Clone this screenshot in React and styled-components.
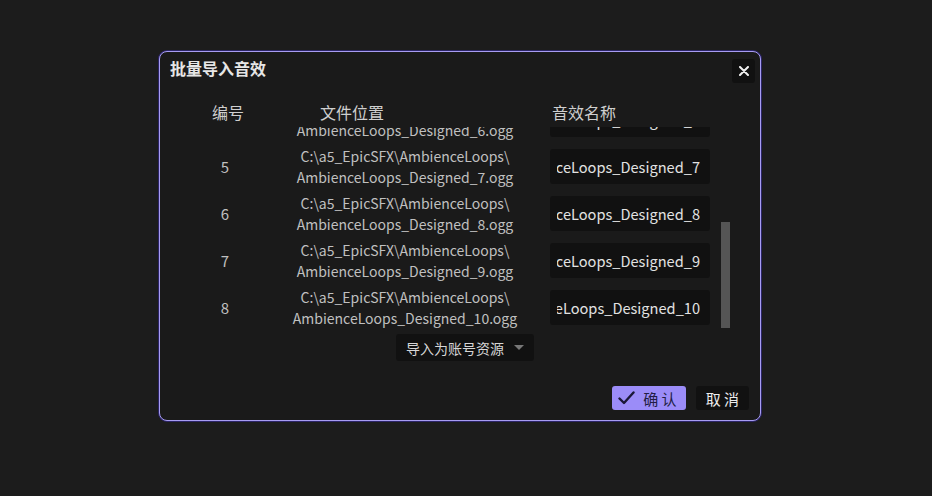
import React, { useLayoutEffect, useRef } from "react";
import styled, { createGlobalStyle } from "styled-components";

const GlobalStyle = createGlobalStyle`
  html, body {
    margin: 0;
    padding: 0;
    background: #1c1c1c;
  }
  body {
    font-family: "Noto Sans CJK SC", "Noto Sans", sans-serif;
  }
`;

const ROW_H = 47;
const VIEW_H = 201;
const SCROLL = 172;

const rows = [1, 2, 3, 4, 5, 6, 7, 8].map((n) => ({
  id: n,
  dir: "C:\\a5_EpicSFX\\AmbienceLoops\\",
  file: `AmbienceLoops_Designed_${n + 2}.ogg`,
  name: `AmbienceLoops_Designed_${n + 2}`,
}));

function App() {
  const viewRef = useRef(null);

  useLayoutEffect(() => {
    if (viewRef.current) viewRef.current.scrollTop = SCROLL;
  }, []);

  const total = rows.length * ROW_H;
  const thumbH = (VIEW_H * VIEW_H) / total;
  const thumbTop = (SCROLL / total) * VIEW_H + 3;

  return (
    <Page>
      <GlobalStyle />
      <Dialog>
        <TitleBar>
          <Title>批量导入音效</Title>
          <CloseButton>
            <svg width="10" height="10" viewBox="0 0 10 10">
              <path d="M1 1 L9 9 M9 1 L1 9" stroke="#f0f0f0" strokeWidth="2" strokeLinecap="round" />
            </svg>
          </CloseButton>
        </TitleBar>

        <HeadRow>
          <HeadCell>编号</HeadCell>
          <HeadCell>文件位置</HeadCell>
          <HeadCell $left>音效名称</HeadCell>
        </HeadRow>

        <ListBox>
          <Viewport ref={viewRef}>
            {rows.map((r) => (
              <Row key={r.id}>
                <Index>{r.id}</Index>
                <Path>
                  <span>{r.dir}</span>
                  <span>{r.file}</span>
                </Path>
                <NameField>
                  <NameClip>
                    <span>{r.name}</span>
                  </NameClip>
                </NameField>
              </Row>
            ))}
          </Viewport>
          <Track>
            <Thumb style={{ height: thumbH, marginTop: thumbTop }} />
          </Track>
        </ListBox>

        <SelectRow>
          <Select>
            导入为账号资源
            <Caret />
          </Select>
        </SelectRow>

        <Footer>
          <Button $primary>
            <svg width="17" height="14" viewBox="0 0 17 14">
              <path d="M1.5 7.5 L6 12 L15.5 1.5" fill="none" stroke="#1b1838" strokeWidth="2.4" strokeLinecap="round" strokeLinejoin="round" />
            </svg>
            确 认
          </Button>
          <Button>取 消</Button>
        </Footer>
      </Dialog>
    </Page>
  );
}

export default App;

const Page = styled.div`
  width: 932px;
  height: 496px;
  box-sizing: border-box;
  padding: 51px 0 0 159px;
  background: #1c1c1c;
`;

const Dialog = styled.div`
  width: 602px;
  height: 370px;
  box-sizing: border-box;
  border: 1px solid #a79cf2;
  border-radius: 8px;
  box-shadow: 0 0 0 1px #2c2566;
  background: #1a1a1a;
  display: flex;
  flex-direction: column;
`;

const TitleBar = styled.div`
  height: 34px;
  display: flex;
  align-items: center;
  justify-content: space-between;
  padding: 0 5px 0 10px;
`;

const Title = styled.div`
  font-size: 16px;
  font-weight: 700;
  color: #e6e6e6;
  margin-top: -3px;
`;

const CloseButton = styled.div`
  width: 23px;
  height: 24px;
  margin-top: 3px;
  border-radius: 3px;
  background: #111111;
  display: flex;
  align-items: center;
  justify-content: center;
`;

const HeadRow = styled.div`
  height: 41px;
  box-sizing: border-box;
  padding-top: 10px;
  margin-left: 20px;
  display: grid;
  grid-template-columns: 96px 152px 1fr;
  align-items: center;
`;

const HeadCell = styled.div`
  font-size: 16px;
  color: #cfcfcf;
  text-align: ${(p) => (p.$left ? "left" : "center")};
  padding-left: ${(p) => (p.$left ? "124px" : "0")};
`;

const ListBox = styled.div`
  height: 201px;
  margin: 0 30px 0 20px;
  display: flex;
`;

const Viewport = styled.div`
  flex: 1;
  overflow: hidden;
`;

const Track = styled.div`
  width: 9px;
  display: flex;
  flex-direction: column;
`;

const Thumb = styled.div`
  width: 9px;
  background: #555555;
`;

const Row = styled.div`
  height: 47px;
  display: grid;
  grid-template-columns: 90px 280px 160px;
  align-items: center;
`;

const Index = styled.div`
  text-align: center;
  font-size: 15px;
  color: #c0c0c0;
`;

const Path = styled.div`
  display: flex;
  flex-direction: column;
  align-items: center;
  padding-right: 10px;
  font-size: 14px;
  line-height: 21px;
  color: #c0c0c0;
  white-space: nowrap;
`;

const NameField = styled.div`
  height: 35px;
  border-radius: 3px;
  background: #111111;
  display: flex;
  align-items: center;
  padding: 0 10px 0 7px;
`;

const NameClip = styled.div`
  flex: 1;
  display: flex;
  justify-content: flex-end;
  overflow: hidden;
  font-size: 14.6px;
  color: #e2e2e2;
  white-space: nowrap;
`;

const SelectRow = styled.div`
  display: flex;
  padding-left: 236px;
  margin-top: 6px;
`;

const Select = styled.div`
  width: 138px;
  height: 27px;
  box-sizing: border-box;
  padding: 0 10px;
  background: #111111;
  border-radius: 3px;
  display: flex;
  align-items: center;
  justify-content: space-between;
  font-size: 14px;
  color: #d6d6d6;
`;

const Caret = styled.span`
  width: 0;
  height: 0;
  border-left: 5px solid transparent;
  border-right: 5px solid transparent;
  border-top: 5px solid #777777;
`;

const Footer = styled.div`
  margin-top: auto;
  padding: 0 11px 10px 0;
  display: flex;
  justify-content: flex-end;
  gap: 10px;
`;

const Button = styled.div`
  height: 24px;
  box-sizing: border-box;
  padding: 0 ${(p) => (p.$primary ? "9px 0 6px" : "10px")};
  border-radius: 3px;
  background: ${(p) => (p.$primary ? "#9b8cf8" : "#111111")};
  color: ${(p) => (p.$primary ? "#221d44" : "#ececec")};
  display: flex;
  align-items: center;
  gap: 8px;
  font-size: 15px;
  white-space: pre;
`;
